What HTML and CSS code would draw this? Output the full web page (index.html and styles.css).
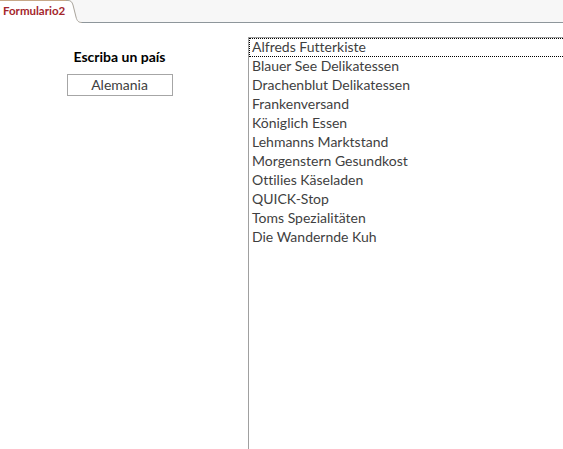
FILE: index.html
```html
<!DOCTYPE html>
<html lang="es">
<head>
<meta charset="utf-8">
<title>Formulario2</title>
<link rel="stylesheet" href="styles.css">
</head>
<body>
<div class="tabbar">
  <div class="tab">Formulario2</div>
  <svg class="tab-curve" width="16" height="23" viewBox="0 0 16 23">
    <path d="M0,0 L2,0 C5,0 6,2 7,5 L10,17 C11,21 12.5,22.5 16,22.5 L16,23 L0,23 Z" fill="#ffffff"/>
    <path d="M0,0.5 L2,0.5 C5,0.5 6,2 7,5 L10,17 C11,21 12.5,22.5 16,22.5" fill="none" stroke="#a9a49b" stroke-width="1"/>
  </svg>
  <div class="tab-fill"></div>
</div>
<div class="content">
  <div class="left">
    <div class="label">Escriba un país</div>
    <div class="textbox">Alemania</div>
  </div>
  <div class="list">
    <div class="item selected">Alfreds Futterkiste</div>
    <div class="item">Blauer See Delikatessen</div>
    <div class="item">Drachenblut Delikatessen</div>
    <div class="item">Frankenversand</div>
    <div class="item">Königlich Essen</div>
    <div class="item">Lehmanns Marktstand</div>
    <div class="item">Morgenstern Gesundkost</div>
    <div class="item">Ottilies Käseladen</div>
    <div class="item">QUICK-Stop</div>
    <div class="item">Toms Spezialitäten</div>
    <div class="item">Die Wandernde Kuh</div>
  </div>
</div>
</body>
</html>
```
FILE: styles.css
```css
html, body {
  margin: 0;
  padding: 0;
  background: #ffffff;
}
body {
  width: 563px;
  height: 449px;
  overflow: hidden;
  font-family: Lato, "Open Sans", sans-serif;
  font-variant-ligatures: none;
}
.tabbar {
  display: flex;
  height: 23px;
  background: #f7f7f7;
}
.tab {
  height: 23px;
  box-sizing: border-box;
  background: #ffffff;
  border-top: 1px solid #c6a888;
  padding: 0 1px 0 3px;
  font-size: 11.5px;
  font-weight: bold;
  line-height: 19px;
  color: #a4262c;
  white-space: nowrap;
}
.tab-curve {
  display: block;
  flex: none;
}
.tab-fill {
  flex: 1;
  height: 23px;
  box-sizing: border-box;
  border-bottom: 1px solid #8e969b;
}
.content {
  display: flex;
  height: 426px;
}
.left {
  width: 248px;
  flex: none;
  box-sizing: border-box;
  padding: 25px 9px 0 0;
  display: flex;
  flex-direction: column;
  align-items: center;
}
.label {
  font-size: 14px;
  font-weight: bold;
  line-height: 17px;
  color: #000000;
}
.textbox {
  margin-top: 9px;
  width: 106px;
  height: 22px;
  box-sizing: border-box;
  border: 1px solid #a6a6a6;
  text-align: center;
  font-size: 14px;
  line-height: 20px;
  color: #404040;
}
.list {
  flex: 1;
  margin-top: 14px;
  border-left: 1px solid #a0a0a0;
  border-top: 1px solid #a0a0a0;
}
.item {
  height: 19px;
  box-sizing: border-box;
  border: 1px dotted transparent;
  padding-left: 2px;
  font-size: 14px;
  line-height: 16px;
  color: #3f3f3f;
  white-space: nowrap;
}
.item.selected {
  border-color: #000000;
  border-right: none;
}
```
